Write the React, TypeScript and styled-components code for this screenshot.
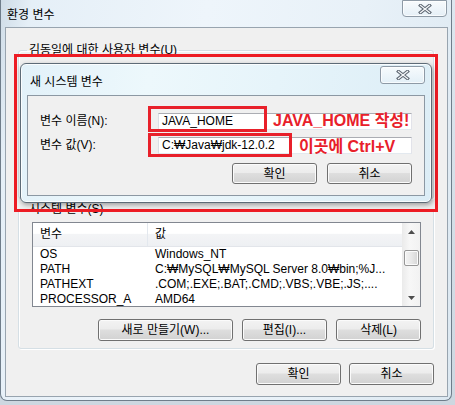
import React from 'react';
import styled, { createGlobalStyle } from 'styled-components';

const GlobalStyle = createGlobalStyle`
    html, body {
        margin: 0;
        padding: 0;
    }
    body {
        width: 455px;
        height: 405px;
        overflow: hidden;
        background: #d6e0e8;
        font-family: "Liberation Sans", "Noto Sans CJK KR", sans-serif;
        font-size: 12px;
        color: #000;
    }
`;

const Page = styled.div`
    position: relative;
    width: 455px;
    height: 405px;
    overflow: hidden;
    background: linear-gradient(#dde7ef, #cdd7e0);
`;

const Window = styled.div`
    box-sizing: border-box;
    width: 452px;
    height: 401px;
    display: flex;
    flex-direction: column;
    padding: 0 3px 3px 4px;
    border: 1px solid #6f7d8a;
    border-top: none;
    border-radius: 0 0 7px 7px;
    background: linear-gradient(100deg, #cfdce7 0%, #e5eff7 6%, #eef5fb 40%, #e8f1f8 70%, #dce8f1 100%);
`;

const TitleBar = styled.div`
    height: 27px;
    flex-shrink: 0;
    display: flex;
    justify-content: space-between;
    align-items: flex-start;
`;

const Title = styled.div`
    padding: 8px 0 0 2px;
    line-height: 14px;
    font-size: 12px;
`;

const CloseButton = styled.div<{ $h: number; $round: string; $mt: number; $mr: number }>`
    box-sizing: border-box;
    width: 45px;
    height: ${p => p.$h}px;
    margin: ${p => p.$mt}px ${p => p.$mr}px 0 0;
    display: flex;
    align-items: center;
    justify-content: center;
    border: 1px solid #8e9aa6;
    border-radius: ${p => p.$round};
    background: linear-gradient(rgba(255, 255, 255, 0.75), rgba(230, 240, 247, 0.6));
    box-shadow: inset 0 0 0 1px rgba(255, 255, 255, 0.7);
`;

const Panel = styled.div`
    flex: 1;
    display: flex;
    flex-direction: column;
    box-sizing: border-box;
    border: 1px solid #98a4af;
    background: #f0f0f0;
    padding: 0 13px 0 12px;
`;

const GroupBox = styled.fieldset<{ $mt: number }>`
    margin: ${p => p.$mt}px 0 0 0;
    padding: 0;
    min-width: 0;
    border: 1px solid #d5dfe5;
    border-radius: 3px;
    box-shadow: inset 1px 1px 0 #fff, 1px 1px 0 #fff;
`;

const GroupLabel = styled.legend`
    margin-left: 8px;
    padding: 0 2px;
    line-height: 14px;
    font-size: 12px;
`;

const HiddenBody = styled.div`
    height: 141px;
`;

const GroupBody = styled.div`
    padding: 6px 12px 7px 13px;
`;

const ListView = styled.div`
    box-sizing: border-box;
    height: 85px;
    display: flex;
    border: 1px solid #828790;
    background: #fff;
    overflow: hidden;
`;

const ListContent = styled.div`
    flex: 1;
    min-width: 0;
    overflow: hidden;
`;

const Columns = styled.div`
    display: grid;
    grid-template-columns: 115px 1fr;
`;

const HeaderRow = styled(Columns)`
    height: 24px;
    background: linear-gradient(#ffffff 0%, #ffffff 45%, #f3f4f6 50%, #eef0f3 100%);
    border-bottom: 1px solid #e2e5ea;
    box-sizing: border-box;
`;

const HeaderCell = styled.div`
    padding: 0 7px;
    line-height: 22px;
    border-right: 1px solid #e3e8ee;
    white-space: nowrap;
    &:last-child {
        border-right: none;
    }
`;

const Row = styled(Columns)`
    height: 15px;
`;

const Cell = styled.div`
    padding: 0 7px;
    line-height: 15px;
    white-space: nowrap;
    overflow: hidden;
`;

const ScrollBar = styled.div`
    width: 17px;
    flex-shrink: 0;
    display: flex;
    flex-direction: column;
    background: linear-gradient(90deg, #ececec, #f7f7f7 40%, #f2f2f2);
    border-left: 1px solid #ebebeb;
`;

const ScrollArrow = styled.div`
    height: 17px;
    display: flex;
    align-items: center;
    justify-content: center;
`;

const ScrollTrack = styled.div`
    flex: 1;
    padding-top: 10px;
    display: flex;
    justify-content: center;
`;

const Thumb = styled.div`
    box-sizing: border-box;
    width: 15px;
    height: 16px;
    border: 1px solid #979797;
    border-radius: 2px;
    background: linear-gradient(90deg, #f3f3f3, #e8e8e8 50%, #d6d6d6);
    box-shadow: inset 0 0 0 1px #fbfbfb;
`;

const ButtonRow = styled.div<{ $gap: number; $mt: number }>`
    display: flex;
    justify-content: flex-end;
    gap: ${p => p.$gap}px;
    margin-top: ${p => p.$mt}px;
`;

const Button = styled.button<{ $w: number; $h?: number }>`
    box-sizing: border-box;
    width: ${p => p.$w}px;
    height: ${p => p.$h ?? 22}px;
    padding: 0;
    border: 1px solid #707070;
    border-radius: 3px;
    background: linear-gradient(#f3f3f3 0%, #ececec 45%, #dedede 50%, #d2d2d2 100%);
    box-shadow: inset 0 0 0 1px #fbfbfb;
    font-family: "Liberation Sans", "Noto Sans CJK KR", sans-serif;
    font-size: 12px;
    color: #000;
    line-height: 1;
`;

/* the "새 시스템 변수" dialog floating over the main window */
const Dialog = styled.div`
    position: absolute;
    left: 20px;
    top: 63px;
    width: 412px;
    height: 140px;
    box-sizing: border-box;
    display: flex;
    flex-direction: column;
    padding: 0 6px 6px 6px;
    border: 1px solid #5d6b77;
    border-radius: 6px;
    background: linear-gradient(100deg, #e2f1f9 0%, #edf8fc 30%, #e6f4fa 60%, #dcedf6 100%);
    box-shadow: 1px 2px 5px rgba(0, 0, 0, 0.35), inset 0 0 0 1px rgba(255, 255, 255, 0.8);
`;

const DialogTitleBar = styled.div`
    height: 31px;
    flex-shrink: 0;
    display: flex;
    justify-content: space-between;
    align-items: flex-start;
`;

const DialogTitle = styled.div`
    padding: 11px 0 0 3px;
    line-height: 14px;
`;

const DialogPanel = styled.div`
    flex: 1;
    box-sizing: border-box;
    border: 1px solid #8c98a3;
    background: #f0f0f0;
    padding: 16px 12px 0 12px;
    display: flex;
    flex-direction: column;
`;

const FieldRow = styled.div<{ $mt: number }>`
    display: grid;
    grid-template-columns: 118px 254px;
    align-items: center;
    margin-top: ${p => p.$mt}px;
`;

const FieldLabel = styled.div`
    line-height: 17px;
    white-space: nowrap;
`;

const InputCell = styled.div`
    position: relative;
    height: 17px;
`;

const TextInput = styled.div`
    box-sizing: border-box;
    height: 17px;
    padding: 0 3px;
    border: 1px solid;
    border-color: #abadb3 #e2e3ea #e3e9ef #dbdfe6;
    background: #fff;
    line-height: 15px;
    white-space: nowrap;
`;

const Highlight = styled.div<{ $top: number; $w: number; $h: number }>`
    position: absolute;
    left: -10px;
    top: ${p => p.$top}px;
    width: ${p => p.$w}px;
    height: ${p => p.$h}px;
    box-sizing: border-box;
    border: 3px solid #e8202a;
`;

const Note = styled.div<{ $left: number; $top: number }>`
    position: absolute;
    left: ${p => p.$left}px;
    top: ${p => p.$top}px;
    line-height: 16px;
    font-size: 16px;
    font-weight: bold;
    color: #e8202a;
    white-space: nowrap;
`;

const FocusBox = styled.div`
    position: absolute;
    left: 14px;
    top: 54px;
    width: 424px;
    height: 158px;
    box-sizing: border-box;
    border: 3px solid #ed1c24;
`;

const CloseGlyph = () => (
    <svg width="14" height="10" viewBox="0 0 14 10">
        <path d="M2.5 1.5 L11.5 8.5 M11.5 1.5 L2.5 8.5" stroke="#5c6570" strokeWidth="3.4" strokeLinecap="square" fill="none" />
        <path d="M2.5 1.5 L11.5 8.5 M11.5 1.5 L2.5 8.5" stroke="#f5f7f9" strokeWidth="1.3" strokeLinecap="square" fill="none" />
    </svg>
);

const Arrow = ({ up }: { up: boolean }) => (
    <svg width="7" height="4" viewBox="0 0 7 4">
        <polygon points={up ? '3.5,0 7,4 0,4' : '0,0 7,0 3.5,4'} fill="#4d4d4d" />
    </svg>
);

const systemVars = [
    { name: 'OS', value: 'Windows_NT' },
    { name: 'PATH', value: 'C:₩MySQL₩MySQL Server 8.0₩bin;%J...' },
    { name: 'PATHEXT', value: '.COM;.EXE;.BAT;.CMD;.VBS;.VBE;.JS;....' },
    { name: 'PROCESSOR_A', value: 'AMD64' },
];

export default function App() {
    return (
        <>
            <GlobalStyle />
            <Page>
                <Window>
                    <TitleBar>
                        <Title>환경 변수</Title>
                        <CloseButton $h={17} $round="0 0 4px 4px" $mt={0} $mr={1}>
                            <CloseGlyph />
                        </CloseButton>
                    </TitleBar>
                    <Panel>
                        <GroupBox $mt={15}>
                            <GroupLabel>김동일에 대한 사용자 변수(U)</GroupLabel>
                            <HiddenBody />
                        </GroupBox>

                        <GroupBox $mt={3}>
                            <GroupLabel>시스템 변수(S)</GroupLabel>
                            <GroupBody>
                                <ListView>
                                    <ListContent>
                                        <HeaderRow>
                                            <HeaderCell>변수</HeaderCell>
                                            <HeaderCell>값</HeaderCell>
                                        </HeaderRow>
                                        {systemVars.map(v => (
                                            <Row key={v.name}>
                                                <Cell>{v.name}</Cell>
                                                <Cell>{v.value}</Cell>
                                            </Row>
                                        ))}
                                    </ListContent>
                                    <ScrollBar>
                                        <ScrollArrow>
                                            <Arrow up />
                                        </ScrollArrow>
                                        <ScrollTrack>
                                            <Thumb />
                                        </ScrollTrack>
                                        <ScrollArrow>
                                            <Arrow up={false} />
                                        </ScrollArrow>
                                    </ScrollBar>
                                </ListView>
                                <ButtonRow $gap={9} $mt={12}>
                                    <Button $w={135}>새로 만들기(W)...</Button>
                                    <Button $w={85}>편집(I)...</Button>
                                    <Button $w={85}>삭제(L)</Button>
                                </ButtonRow>
                            </GroupBody>
                        </GroupBox>

                        <ButtonRow $gap={8} $mt={14}>
                            <Button $w={85}>확인</Button>
                            <Button $w={85}>취소</Button>
                        </ButtonRow>
                    </Panel>
                </Window>

                <FocusBox />

                <Dialog>
                    <DialogTitleBar>
                        <DialogTitle>새 시스템 변수</DialogTitle>
                        <CloseButton $h={18} $round="3px" $mt={2} $mr={0}>
                            <CloseGlyph />
                        </CloseButton>
                    </DialogTitleBar>
                    <DialogPanel>
                        <FieldRow $mt={1}>
                            <FieldLabel>변수 이름(N):</FieldLabel>
                            <InputCell>
                                <TextInput>JAVA_HOME</TextInput>
                                <Highlight $top={-7} $w={119} $h={26} />
                                <Note $left={115} $top={0}>JAVA_HOME 작성!</Note>
                            </InputCell>
                        </FieldRow>
                        <FieldRow $mt={7}>
                            <FieldLabel>변수 값(V):</FieldLabel>
                            <InputCell>
                                <TextInput>C:₩Java₩jdk-12.0.2</TextInput>
                                <Highlight $top={-4} $w={144} $h={24} />
                                <Note $left={141} $top={2}>이곳에 Ctrl+V</Note>
                            </InputCell>
                        </FieldRow>
                        <ButtonRow $gap={10} $mt={9}>
                            <Button $w={85} $h={21}>확인</Button>
                            <Button $w={85} $h={21}>취소</Button>
                        </ButtonRow>
                    </DialogPanel>
                </Dialog>
            </Page>
        </>
    );
}
